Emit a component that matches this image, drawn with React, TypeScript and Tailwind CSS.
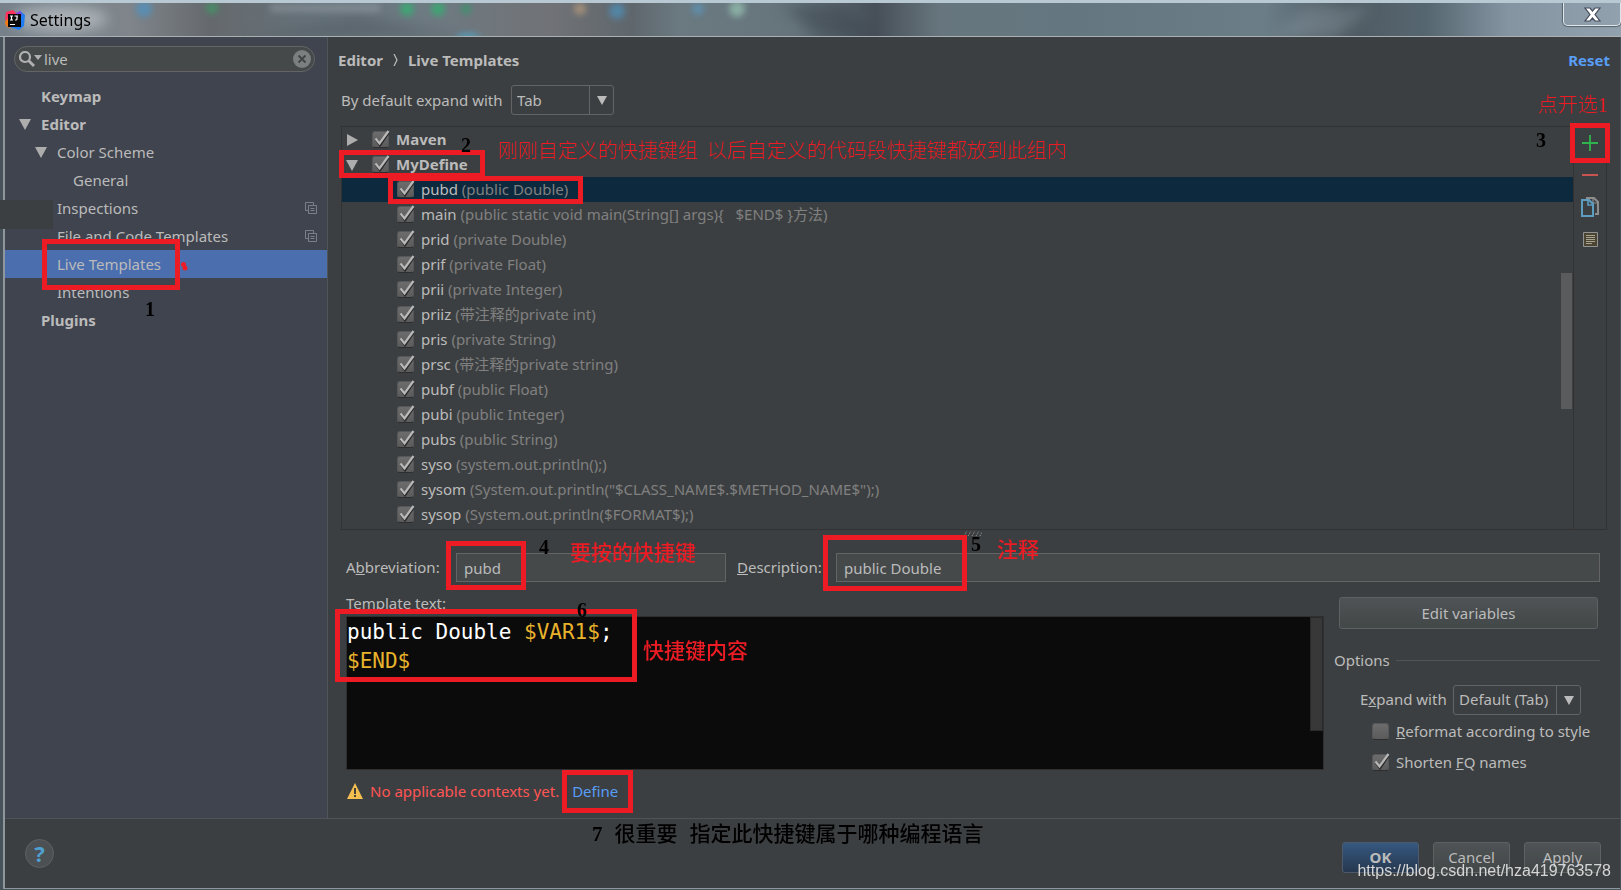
import { useState } from 'react';
import type { ReactNode } from 'react';

interface ITemplate {
    name: string;
    description: string;
}

const templates: ITemplate[] = [
    { name: 'pubd', description: '(public Double)' },
    { name: 'main', description: '(public static void main(String[] args){   $END$ }方法)' },
    { name: 'prid', description: '(private Double)' },
    { name: 'prif', description: '(private Float)' },
    { name: 'prii', description: '(private Integer)' },
    { name: 'priiz', description: '(带注释的private int)' },
    { name: 'pris', description: '(private String)' },
    { name: 'prsc', description: '(带注释的private string)' },
    { name: 'pubf', description: '(public Float)' },
    { name: 'pubi', description: '(public Integer)' },
    { name: 'pubs', description: '(public String)' },
    { name: 'syso', description: '(system.out.println();)' },
    { name: 'sysom', description: '(System.out.println("$CLASS_NAME$.$METHOD_NAME$");)' },
    { name: 'sysop', description: '(System.out.println($FORMAT$);)' },
];

const navItems = [
    { label: 'Keymap', pad: 'pl-[36px]', bold: true },
    { label: 'Editor', pad: 'pl-[14px]', bold: true, open: true },
    { label: 'Color Scheme', pad: 'pl-[30px]', open: true },
    { label: 'General', pad: 'pl-[68px]' },
    { label: 'Inspections', pad: 'pl-[52px]', copy: true },
    { label: 'File and Code Templates', pad: 'pl-[52px]', copy: true },
    { label: 'Live Templates', pad: 'pl-[52px]' },
    { label: 'Intentions', pad: 'pl-[52px]' },
    { label: 'Plugins', pad: 'pl-[36px]', bold: true },
];

const Arrow = ({ right = false }: { right?: boolean }) => (
    <svg className="h-3 w-3 shrink-0" viewBox="0 0 12 12" fill="#adadad" aria-hidden="true">
        {right ? <path d="M1 0 12 6 1 12z" /> : <path d="M0 1h12L6 12z" />}
    </svg>
);

const Logo = () => (
    <svg className="h-5 w-5" viewBox="0 0 20 20" aria-hidden="true">
        <path d="M1 2 8 0l4 4-2 9-7 1-3-5z" fill="#fe315d" />
        <path d="M0 12l4-5 3 9-2 2-4-2z" fill="#f97a12" />
        <path d="M11 4l4-3 5 4-1 11-5 4-9-3 2-4z" fill="#1f7cf2" />
        <path d="M11 3l4-2 2 4-4 4z" fill="#8f3fe0" />
        <path d="M3 4h13v13H3z" fill="#0a0a0a" />
        <path d="M5 6h3M6.500 6v4M5 10h3M9.500 6H13M12 6v3q0 1-1.300 1H10M5 14.500h5" stroke="#fff" strokeWidth="1.200" fill="none" />
    </svg>
);

const CopyMark = () => (
    <svg className="h-3 w-3" viewBox="0 0 12 12" fill="none" stroke="#7b7f86" aria-hidden="true">
        <path d="M3 8.500H.5v-8h8V3" />
        <path d="M3.500 3.500h8v8h-8zM5.500 6.500h4M5.500 8.500h4" />
    </svg>
);

const Checkbox = ({ id, defaultChecked = true }: { id: string; defaultChecked?: boolean }) => (
    <span className="relative flex h-[17px] w-[17px] shrink-0">
        <input
            id={id}
            type="checkbox"
            defaultChecked={defaultChecked}
            className="peer h-[17px] w-[17px] appearance-none rounded-[3px] border border-[#55585a] border-b-[#2c2e2f] bg-linear-to-b from-[#6c6c6c] to-[#5b5b5b]"
        />
        <svg className="pointer-events-none absolute inset-0 hidden overflow-visible peer-checked:block" viewBox="0 0 17 17" fill="none" aria-hidden="true">
            <path d="M4 8.500l4 5.500L16.500 1.500" stroke="#2b2b2b" strokeWidth="2.500" />
            <path d="M3.500 7.500l4 5L16.500 0" stroke="#b9b9b9" strokeWidth="2.200" />
        </svg>
    </span>
);

const Combo = ({ id, value, className }: { id: string; value: string; className: string }) => (
    <span className={`relative flex h-[30px] ${className}`}>
        <select id={id} className="w-full appearance-none rounded-[3px] border border-[#646464] bg-[#3c3f41] pl-[5px] outline-none">
            <option>{value}</option>
        </select>
        <span className="pointer-events-none absolute inset-y-0 right-0 flex w-[25px] items-center justify-center border-l border-[#646464]">
            <svg className="h-[10px] w-[10px]" viewBox="0 0 10 10" fill="#bbbbbb" aria-hidden="true"><path d="M0 1h10L5 10z" /></svg>
        </span>
    </span>
);

const Frame = ({ className }: { className: string }) => (
    <div className={`absolute border-[5px] border-[#ed1c24] ${className}`} />
);

const Note = ({ className, children }: { className: string; children: ReactNode }) => (
    <div className={`absolute flex whitespace-nowrap leading-6 ${className}`}>{children}</div>
);

// Red frames and step numbers drawn over the window
const Annotations = () => (
    <div className="pointer-events-none absolute inset-0 z-10 font-['Liberation_Serif','Noto_Sans_CJK_SC',serif] text-xl text-[#ed1c24]">
        <div className="absolute left-0 top-[200px] h-[29px] w-[53px] bg-[#3c3f41]" />
        <Frame className="left-[42px] top-[239px] h-[51px] w-[138px]" />
        <svg className="absolute left-[181px] top-[262px] h-[9px] w-[7px]" viewBox="0 0 7 9" fill="#ed1c24"><circle cx="2.500" cy="2.500" r="2.500" /><circle cx="4" cy="6" r="2.500" /></svg>
        <Frame className="left-[339px] top-[150px] h-[28px] w-[146px]" />
        <Frame className="left-[388px] top-[176px] h-[28px] w-[195px]" />
        <Frame className="left-[1570px] top-[123px] h-[40px] w-[40px]" />
        <Frame className="left-[446px] top-[541px] h-[49px] w-[80px]" />
        <Frame className="left-[823px] top-[535px] h-[56px] w-[144px]" />
        <Frame className="left-[335px] top-[609px] h-[73px] w-[302px]" />
        <Frame className="left-[562px] top-[770px] h-[43px] w-[71px]" />

        <Note className="left-[498px] top-[139px] gap-[9px] font-light"><span>刚刚自定义的快捷键组</span><span>以后自定义的代码段快捷键都放到此组内</span></Note>
        <Note className="left-[1538px] top-[93px] font-light">点开选1</Note>
        <Note className="left-[570px] top-[541px] text-[21px] font-medium">要按的快捷键</Note>
        <Note className="left-[997px] top-[538px] text-[21px] font-medium">注释</Note>
        <Note className="left-[643px] top-[639px] text-[21px] font-medium">快捷键内容</Note>

        <div className="font-bold text-black">
            <Note className="left-[145px] top-[297px]">1</Note>
            <Note className="left-[461px] top-[133px]">2</Note>
            <Note className="left-[1536px] top-[128px]">3</Note>
            <Note className="left-[539px] top-[535px]">4</Note>
            <Note className="left-[971px] top-[532px]">5</Note>
            <Note className="left-[577px] top-[598px]">6</Note>
            <Note className="left-[592px] top-[822px] gap-[12px] text-[21px]">
                <span>7</span>
                <span className="font-medium">很重要</span>
                <span className="font-medium">指定此快捷键属于哪种编程语言</span>
            </Note>
        </div>
    </div>
);

const TitleBar = () => (
    <header className="relative flex h-[37px] items-center overflow-hidden border-t-[3px] border-b border-t-[#b9c9d3] border-b-[#a9b1b5] bg-[linear-gradient(90deg,#76818a,#7f858b_8%,#65696d_13%,#66727a_19%,#6f7b83_26%,#707276_34%,#5f676d_39%,#6b7a81_42%,#66757c_49%,#474f58_54%,#67767e_58%,#647780_66%,#6b7d87_78%,#4f5a62_83%,#566670_88%,#8494a1_93%,#91a1ae)]">
        <svg className="absolute inset-0 h-full w-full" aria-hidden="true">
            <g className="blur-[7px]">
                <ellipse cx="60" cy="16" rx="48" ry="13" fill="#d4d8dc" opacity=".55" />
                <path d="M250 34 360 14l110 20z" fill="#4b555c" opacity=".5" />
                <path d="M780 2h60l40 32H820z" fill="#3c454f" opacity=".5" />
                <path d="M1270 34l40-30h60l-30 30z" fill="#8797a0" opacity=".4" />
            </g>
            <g className="blur-[3px]" opacity=".75">
                <rect x="270" y="1" width="110" height="8" fill="#a8b0b5" opacity=".5" />
                <circle cx="144" cy="6" r="8" fill="#4e93c2" />
                <circle cx="212" cy="5" r="6" fill="#3f9a66" />
                <circle cx="407" cy="6" r="7" fill="#2fb371" />
                <circle cx="438" cy="6" r="7" fill="#2fb371" />
                <circle cx="466" cy="6" r="5" fill="#2f9a68" />
                <circle cx="580" cy="6" r="6" fill="#b79b7c" />
                <circle cx="617" cy="8" r="8" fill="#4e8fb8" />
                <circle cx="698" cy="6" r="6" fill="#5b95b8" />
                <circle cx="737" cy="6" r="8" fill="#95c0b0" />
                <ellipse cx="468" cy="34" rx="12" ry="4" fill="#4ea6cc" />
            </g>
        </svg>
        <div className="relative flex h-full w-full items-center gap-[5px] pl-[5px] text-base text-black">
            <Logo />
            <h1>Settings</h1>
            <button aria-label="Close" className="ml-auto flex h-[23px] w-[58px] items-center justify-center self-start rounded-b-[5px] border border-t-0 border-[#dfe6ea] shadow-[0_0_1px_1px_#56636d]">
                <svg className="h-[15px] w-[17px]" viewBox="0 0 17 15" aria-hidden="true">
                    <path d="M1 1h5l2.500 3L11 1h5l-5 6.500L16 14h-5l-2.500-3L6 14H1l5-6.500z" fill="#fff" stroke="#444b5c" strokeWidth="1.200" />
                </svg>
            </button>
        </div>
    </header>
);

const Sidebar = () => {
    const [query, setQuery] = useState('live');
    const [selected, setSelected] = useState('Live Templates');

    return (
        <aside className="w-[323px] shrink-0 border-r border-[#515457] bg-[#40444e]">
            <div className="mr-[12px] ml-[9px] mt-[9px] flex h-[26px] items-center rounded-full border border-[#646464] bg-[#45494a] pr-[3px] pl-[4px]">
                <svg className="h-4 w-[23px] shrink-0" viewBox="0 0 23 16" fill="none" aria-hidden="true">
                    <circle cx="6" cy="6" r="5" stroke="#b0b0b0" strokeWidth="2.200" />
                    <path d="M9.500 9.500 15 15" stroke="#b0b0b0" strokeWidth="2.800" />
                    <path d="M15 4h8l-4 5z" fill="#b0b0b0" />
                </svg>
                <input aria-label="Search settings" className="min-w-0 flex-1 bg-transparent pl-[2px] outline-none" value={query} onChange={e => setQuery(e.target.value)} />
                <button aria-label="Clear" onClick={() => setQuery('')}>
                    <svg className="h-[18px] w-[18px]" viewBox="0 0 18 18" aria-hidden="true">
                        <circle cx="9" cy="9" r="9" fill="#7c7f80" />
                        <path d="M5.500 5.500l7 7M12.500 5.500l-7 7" stroke="#3f4345" strokeWidth="1.800" />
                    </svg>
                </button>
            </div>
            <nav className="mt-[10px]">
                {navItems.map(item => (
                    <button
                        key={item.label}
                        onClick={() => setSelected(item.label)}
                        className={`flex h-7 w-full items-center gap-[10px] pr-[10px] text-left ${item.pad} ${item.bold ? 'font-bold' : ''} ${selected === item.label ? 'bg-[#4b6eaf]' : ''}`}
                    >
                        {item.open && <Arrow />}
                        <span className="flex-1">{item.label}</span>
                        {item.copy && <CopyMark />}
                    </button>
                ))}
            </nav>
        </aside>
    );
};

const TemplateList = () => {
    const [selected, setSelected] = useState('pubd');

    return (
        <div className="mt-[11px] mr-[13px] ml-[13px] flex border border-[#323232]">
            <div className="relative min-w-0 flex-1 pb-[2px]">
                <div className="flex h-[25px] items-center pl-[4px] font-bold">
                    <Arrow right />
                    <span className="w-[14px]" />
                    <Checkbox id="group-maven" />
                    <label htmlFor="group-maven" className="pl-[7px]">Maven</label>
                </div>
                <div className="flex h-[25px] items-center pl-[4px] font-bold">
                    <Arrow />
                    <span className="w-[14px]" />
                    <Checkbox id="group-mydefine" />
                    <label htmlFor="group-mydefine" className="pl-[7px]">MyDefine</label>
                </div>
                {templates.map(template => (
                    <div
                        key={template.name}
                        onClick={() => setSelected(template.name)}
                        className={`flex h-[25px] items-center gap-[7px] pl-[55px] ${selected === template.name ? 'bg-[#0d293e]' : ''}`}
                    >
                        <Checkbox id={`template-${template.name}`} />
                        <label htmlFor={`template-${template.name}`} className="whitespace-pre text-[#808080]">
                            <span className="text-[#bbbbbb]">{template.name}</span> {template.description}
                        </label>
                    </div>
                ))}
                <div className="absolute right-[1px] top-[146px] h-[136px] w-[11px] bg-[#5a5b5d]" />
            </div>
            <div className="flex w-[33px] flex-col items-center border-l border-[#323232]">
                <button aria-label="Add" className="flex h-8 items-center">
                    <svg className="h-4 w-4" viewBox="0 0 16 16" aria-hidden="true"><path d="M8 0v16M0 8h16" stroke="#2fb34c" strokeWidth="1.800" /></svg>
                </button>
                <button aria-label="Remove" className="flex h-8 items-center">
                    <svg className="h-4 w-4" viewBox="0 0 16 16" aria-hidden="true"><path d="M0 8h16" stroke="#c75450" strokeWidth="2" /></svg>
                </button>
                <button aria-label="Duplicate" className="flex h-8 items-center">
                    <svg className="h-5 w-[18px]" viewBox="0 0 18 20" fill="none" aria-hidden="true">
                        <path d="M5 1h8l4 4v12h-3" stroke="#8d8d8d" strokeWidth="2" />
                        <path d="M12 1v5h5" stroke="#8d8d8d" strokeWidth="1.200" />
                        <path d="M1 3h7l4 4v12H1z" fill="#3c3f41" stroke="#5c9dc0" strokeWidth="2" />
                        <path d="M7 3v5h5" stroke="#5c9dc0" strokeWidth="1.600" />
                    </svg>
                </button>
                <button aria-label="Restore defaults" className="flex h-8 items-center">
                    <svg className="h-[15px] w-[15px]" viewBox="0 0 15 15" aria-hidden="true">
                        <path d="M.5.5h14v14H.5z" fill="#4b4532" stroke="#929292" />
                        <path d="M3 3.500h9M3 5.500h9M3 7.500h9M3 9.500h9M3 11.500h6" stroke="#a8a493" />
                    </svg>
                </button>
            </div>
        </div>
    );
};

const inputClass = 'h-[29px] min-w-0 border border-[#646464] bg-[#45494a] px-[7px] outline-none';
const buttonClass = 'rounded-[3px] border border-[#5e6162] bg-linear-to-b from-[#4f5355] to-[#424748]';

const TemplateForm = () => (
    <div className="pr-[20px] pl-[18px]">
        <div className="mt-[1px] flex justify-center">
            <svg className="h-[5px] w-[18px]" viewBox="0 0 18 5" stroke="#9a9a9a" strokeDasharray="1 1" aria-hidden="true">
                <path d="M0 5l3-5M4 5l3-5M8 5l3-5M12 5l3-5M16 5l2-4" />
            </svg>
        </div>
        <div className="mt-[17px] flex items-center">
            <label htmlFor="abbreviation" className="w-[110px] shrink-0">A<u>b</u>breviation:</label>
            <input id="abbreviation" className={`w-[270px] ${inputClass}`} defaultValue="pubd" />
            <label htmlFor="description" className="ml-[11px] w-[99px] shrink-0"><u>D</u>escription:</label>
            <input id="description" className={`flex-1 ${inputClass}`} defaultValue="public Double" />
        </div>
        <div className="flex">
            <div className="min-w-0 flex-1">
                <div id="template-text" className="mt-[11px] h-5 leading-5">Template text:</div>
                <div className="relative mt-[3px] h-[154px] border border-[#2f2f2f] bg-[#0b0b0b]">
                    <pre
                        role="textbox"
                        aria-labelledby="template-text"
                        aria-multiline="true"
                        contentEditable
                        suppressContentEditableWarning
                        className="h-full pt-[1px] font-['DejaVu_Sans_Mono',monospace] text-[21px] leading-[29px] text-white outline-none"
                    >
                        public Double <span className="text-[#e8b32c]">$VAR1$</span>;{'\n'}<span className="text-[#e8b32c]">$END$</span>
                    </pre>
                    <div className="absolute right-0 top-0 h-[114px] w-[13px] border border-[#2b2b2b] bg-[#383838]" />
                </div>
                <div className="mt-[11px] flex h-5 items-center">
                    <svg className="ml-[1px] h-4 w-4" viewBox="0 0 16 16" aria-hidden="true">
                        <path d="M8 0l8 16H0z" fill="#f5bf4f" />
                        <path d="M8 5v6M8 12v2" stroke="#333" strokeWidth="1.800" />
                    </svg>
                    <span className="ml-[7px] text-[#ff5555]">No applicable contexts yet.</span>
                    <a href="#" className="ml-[13px] text-[#589df6]">Define</a>
                </div>
            </div>
            <div className="ml-[10px] w-[266px] shrink-0 pt-[15px]">
                <button className={`ml-[5px] block h-[32px] w-[259px] ${buttonClass}`}>Edit variables</button>
                <fieldset className="mt-[20px]">
                    <legend className="flex w-full items-center gap-[6px]">Options<span className="h-px flex-1 bg-[#515457]" /></legend>
                    <div className="mt-[13px] flex items-center pl-[26px]">
                        <label htmlFor="expand" className="w-[93px]">E<u>x</u>pand with</label>
                        <Combo id="expand" value="Default (Tab)" className="w-[128px]" />
                    </div>
                    <div className="mt-[5px] flex h-[24px] items-center gap-[7px] pl-[38px]">
                        <Checkbox id="reformat" defaultChecked={false} />
                        <label htmlFor="reformat" className="whitespace-nowrap"><u>R</u>eformat according to style</label>
                    </div>
                    <div className="mt-[7px] flex h-[24px] items-center gap-[7px] pl-[38px]">
                        <Checkbox id="shorten" />
                        <label htmlFor="shorten">Shorten <u>F</u>Q names</label>
                    </div>
                </fieldset>
            </div>
        </div>
    </div>
);

const App = () => {
    return (
        <div className="relative flex min-h-screen flex-col bg-[#48525b] font-['Noto_Sans','Noto_Sans_CJK_SC',sans-serif] text-[15px] text-[#bbbbbb]">
            <TitleBar />
            <div className="mr-[1px] mb-[1px] ml-[3px] flex flex-1 flex-col border-b border-l-2 border-[#8e979b] bg-[#3c3f41]">
                <div className="flex flex-1 border-b border-[#515457]">
                    <Sidebar />
                    <main className="min-w-0 flex-1 pb-[17px]">
                        <div className="mt-[11px] flex h-6 items-center gap-[10px] pr-[10px] pl-[10px] font-bold">
                            <span>Editor</span>
                            <svg className="h-3 w-[5px]" viewBox="0 0 5 12" fill="none" stroke="#bbbbbb" strokeWidth="1.200" aria-hidden="true"><path d="M1 0l3 6-3 6" /></svg>
                            <span>Live Templates</span>
                            <a href="#" className="ml-auto text-[#589df6]">Reset</a>
                        </div>
                        <div className="mt-[13px] flex items-center pl-[13px]">
                            <label htmlFor="default-expand" className="w-[170px]">By default expand with</label>
                            <Combo id="default-expand" value="Tab" className="w-[103px]" />
                        </div>
                        <TemplateList />
                        <TemplateForm />
                    </main>
                </div>
                <footer className="flex h-[69px] items-center justify-between pr-[19px] pl-[20px]">
                    <button aria-label="Help" className="flex h-[29px] w-[29px] items-center justify-center rounded-full border border-[#5e6162] bg-[#4c5052] text-[22px] font-bold text-[#4f9fd0]">?</button>
                    <div className="flex gap-[14px] pt-[8px]">
                        <button className="h-[31px] w-[77px] rounded-[3px] border border-[#4c5a6b] bg-linear-to-b from-[#365880] to-[#26384f] font-bold">OK</button>
                        <button className={`h-[31px] w-[77px] ${buttonClass}`}>Cancel</button>
                        <button className={`h-[31px] w-[77px] ${buttonClass}`}>Apply</button>
                    </div>
                </footer>
            </div>
            <Annotations />
            <div className="pointer-events-none absolute right-[10px] bottom-[7px] z-20 font-['Liberation_Sans',sans-serif] text-base text-[#d6d6d6]">https://blog.csdn.net/hza419763578</div>
        </div>
    );
};

export default App;
